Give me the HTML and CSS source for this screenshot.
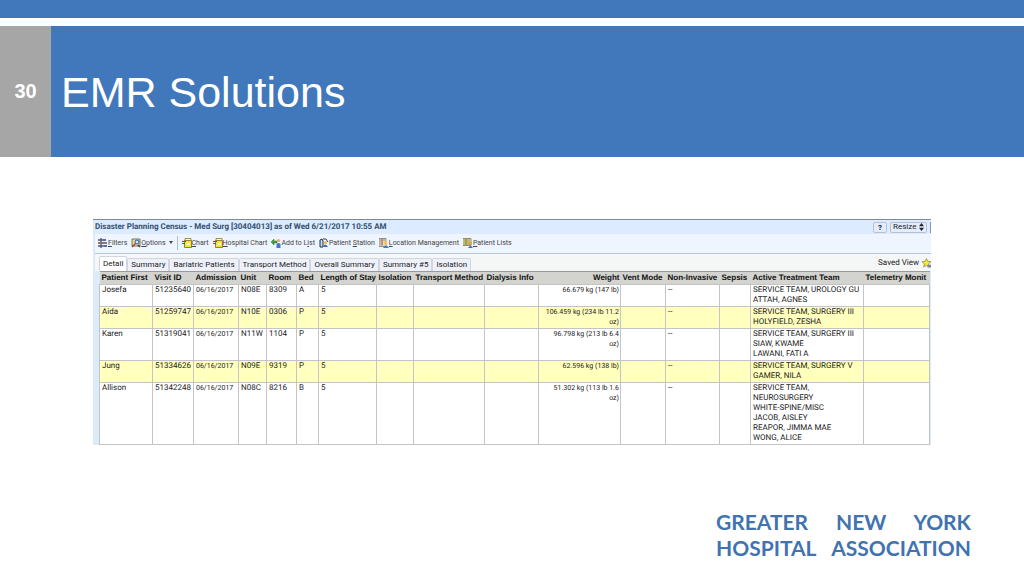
FILE: index.html
```
<!DOCTYPE html>
<html lang="en">
<head>
    <meta charset="UTF-8">
    <meta name="viewport" content="width=device-width, initial-scale=1.0">
    <title>EMR Solutions</title>
    <link rel="stylesheet" href="styles.css">
</head>
<body>
    <div class="top-bar"></div>
    <header class="slide-header">
        <div class="slide-number">30</div>
        <h1>EMR Solutions</h1>
    </header>

    <main class="census">
        <div class="census-title">
            <h2>Disaster Planning Census - Med Surg [30404013] as of Wed 6/21/2017 10:55 AM</h2>
            <div class="title-buttons">
                <button type="button" class="help">?</button>
                <button type="button" class="resize">Resize
                    <svg viewBox="0 0 5 8" width="5" height="8"><path d="M0 3.3L2.5 0 5 3.3zM0 4.7L2.5 8 5 4.7z" fill="#223"/></svg>
                </button>
                <span class="button-edge"></span>
            </div>
        </div>

        <!-- Toolbar -->
        <div class="toolbar">
            <button type="button">
                <svg viewBox="0 0 10 10"><path d="M3 0v10M0 2h6M0 5h9M0 8h6" stroke="#556" stroke-width="1.3"/><path d="M5 1h3v2H5zM6 7h3v2H6z" fill="#66a"/><path d="M1 4h2v2H1z" fill="#b66"/></svg>
                <span><u>F</u>ilters</span>
            </button>
            <button type="button">
                <svg viewBox="0 0 10 10"><path d="M1 1h8v7H1z" fill="#e9df8c" stroke="#555" stroke-width=".8"/><circle cx="6" cy="4" r="2" fill="#cfe4ff" stroke="#335a9c"/><path d="M4.5 5.5L1 9" stroke="#a33" stroke-width="1.3"/><path d="M7 7l2 2" stroke="#335" stroke-width="1.2"/></svg>
                <span><u>O</u>ptions</span>
                <svg class="arrow" viewBox="0 0 4 3"><path d="M0 0h4L2 3z" fill="#445"/></svg>
            </button>
            <span class="separator"></span>
            <button type="button">
                <svg viewBox="0 0 10 10"><path d="M2.5 2.5h7v7h-7z" fill="#f8e23c" stroke="#8b761c" stroke-width=".9"/><path d="M3 .5h6v2H3z" fill="#fffbd0" stroke="#8b761c" stroke-width=".8"/><path d="M0 3.5h4M0 5.5h3" stroke="#a33" stroke-width="1"/><path d="M4.5 5h3.5v2H4.5z" fill="#fffbd0"/></svg>
                <span><u>C</u>hart</span>
            </button>
            <button type="button">
                <svg viewBox="0 0 10 10"><path d="M2.5 2.5h7v7h-7z" fill="#f8e23c" stroke="#8b761c" stroke-width=".9"/><path d="M3 .5h6v2H3z" fill="#fffbd0" stroke="#8b761c" stroke-width=".8"/><path d="M0 3.5h4M0 5.5h3" stroke="#a33" stroke-width="1"/><path d="M4.5 5h3.5v2H4.5z" fill="#fffbd0"/></svg>
                <span><u>H</u>ospital Chart</span>
            </button>
            <button type="button">
                <svg viewBox="0 0 10 10"><path d="M0 4l3-3v2h3v2H3v2z" fill="#3fa244" stroke="#26722b" stroke-width=".5"/><circle cx="7.5" cy="2.5" r="1.6" fill="#e0b070"/><path d="M5.5 10V6q2-2 4 0v4z" fill="#3f78c8"/></svg>
                <span>Add to L<u>i</u>st</span>
            </button>
            <button type="button">
                <svg viewBox="0 0 10 10"><path d="M1 9V2l2-1 1 2v6z" fill="#c9d9ee" stroke="#234" stroke-width="1"/><path d="M4 1h3l2 3" fill="none" stroke="#345" stroke-width="1"/><circle cx="6.5" cy="4.5" r="1.6" fill="#e7b86c"/><path d="M4 9q2-5 5 0z" fill="#3d6fc0"/></svg>
                <span>Patient <u>S</u>tation</span>
            </button>
            <button type="button">
                <svg viewBox="0 0 10 10"><path d="M0 .5h7v8H0z" fill="#dfe5c2" stroke="#667" stroke-width=".7"/><path d="M1 2h5M1 4h3M1 6h3M3 1v7" stroke="#a65" stroke-width=".8"/><circle cx="6.5" cy="5" r="1.9" fill="#efc65c"/><path d="M4 10q3-5 6 0z" fill="#4179c4"/></svg>
                <span><u>L</u>ocation Management</span>
            </button>
            <button type="button">
                <svg viewBox="0 0 10 10"><path d="M0 .5h8v7H0z" fill="#f2e78c" stroke="#665" stroke-width=".7"/><path d="M1 2h6M1 4h6M1 6h6M3 1v6" stroke="#7a7438" stroke-width=".8"/><circle cx="7.5" cy="5.5" r="1.5" fill="#d99c5a"/><path d="M5 10q2.5-4 5 0z" fill="#3b6cba"/></svg>
                <span><u>P</u>atient Lists</span>
            </button>
        </div>

        <!-- Tabs -->
        <div class="tab-row">
            <nav class="tabs">
                <button type="button" class="active">Detail</button>
                <button type="button">Summary</button>
                <button type="button">Bariatric Patients</button>
                <button type="button">Transport Method</button>
                <button type="button">Overall Summary</button>
                <button type="button">Summary #5</button>
                <button type="button">Isolation</button>
            </nav>
            <div class="saved-view">
                <span>Saved View</span>
                <svg viewBox="0 0 10 12" width="9" height="12"><path d="M5 1l1.4 3.2 3.6.4-2.7 2.3.8 3.6L5 8.6l-3.1 1.9.8-3.6L0 4.6l3.6-.4z" fill="#f4ea35" stroke="#8c8730" stroke-width=".8"/><path d="M6 8h4v3H6z" fill="#7a86a8"/></svg>
            </div>
        </div>

        <table>
            <colgroup>
                <col class="c-name"><col class="c-visit"><col class="c-date"><col class="c-unit">
                <col class="c-room"><col class="c-bed"><col class="c-stay"><col class="c-iso">
                <col class="c-transport"><col class="c-dialysis"><col class="c-weight"><col class="c-vent">
                <col class="c-invasive"><col class="c-sepsis"><col class="c-team"><col class="c-monitor">
            </colgroup>
            <thead>
                <tr>
                    <th>Patient First</th><th>Visit ID</th><th>Admission</th><th>Unit</th>
                    <th>Room</th><th>Bed</th><th>Length of Stay</th><th>Isolation</th>
                    <th>Transport Method</th><th>Dialysis Info</th><th class="weight">Weight</th><th>Vent Mode</th>
                    <th>Non-Invasive</th><th>Sepsis</th><th>Active Treatment Team</th><th>Telemetry Monit</th>
                </tr>
            </thead>
            <tbody>
                <tr>
                    <td>Josefa</td><td>51235640</td><td class="date">06/16/2017</td><td>N08E</td><td>8309</td><td>A</td><td>5</td>
                    <td></td><td></td><td></td><td class="weight">66.679 kg (147 lb)</td><td></td><td>--</td><td></td>
                    <td>SERVICE TEAM, UROLOGY GU<br>ATTAH, AGNES</td><td></td>
                </tr>
                <tr>
                    <td>Aida</td><td>51259747</td><td class="date">06/16/2017</td><td>N10E</td><td>0306</td><td>P</td><td>5</td>
                    <td></td><td></td><td></td><td class="weight">106.459 kg (234 lb 11.2<br>oz)</td><td></td><td>--</td><td></td>
                    <td>SERVICE TEAM, SURGERY III<br>HOLYFIELD, ZESHA</td><td></td>
                </tr>
                <tr>
                    <td>Karen</td><td>51319041</td><td class="date">06/16/2017</td><td>N11W</td><td>1104</td><td>P</td><td>5</td>
                    <td></td><td></td><td></td><td class="weight">96.798 kg (213 lb 6.4<br>oz)</td><td></td><td>--</td><td></td>
                    <td>SERVICE TEAM, SURGERY III<br>SIAW, KWAME<br>LAWANI, FATI A</td><td></td>
                </tr>
                <tr>
                    <td>Jung</td><td>51334626</td><td class="date">06/16/2017</td><td>N09E</td><td>9319</td><td>P</td><td>5</td>
                    <td></td><td></td><td></td><td class="weight">62.596 kg (138 lb)</td><td></td><td>--</td><td></td>
                    <td>SERVICE TEAM, SURGERY V<br>GAMER, NILA</td><td></td>
                </tr>
                <tr>
                    <td>Allison</td><td>51342248</td><td class="date">06/16/2017</td><td>N08C</td><td>8216</td><td>B</td><td>5</td>
                    <td></td><td></td><td></td><td class="weight">51.302 kg (113 lb 1.6<br>oz)</td><td></td><td>--</td><td></td>
                    <td>SERVICE TEAM,<br>NEUROSURGERY<br>WHITE-SPINE/MISC<br>JACOB, AISLEY<br>REAPOR, JIMMA MAE<br>WONG, ALICE</td><td></td>
                </tr>
            </tbody>
        </table>
    </main>

    <footer class="logo">
        <div class="logo-text">
            <div>GREATER NEW YORK</div>
            <div>HOSPITAL ASSOCIATION</div>
        </div>
    </footer>
</body>
</html>
```
FILE: styles.css
```
* {
    box-sizing: border-box;
}
body {
    margin: 0;
    background-color: white;
    font-family: "Liberation Sans", Arial, sans-serif;
}
button {
    font-family: inherit;
    font-size: inherit;
    line-height: inherit;
    color: inherit;
    border: none;
    background: none;
    padding: 0;
    cursor: pointer;
}
.top-bar {
    height: 18px;
    margin-bottom: 8px;
    background-color: #4178bc;
}
.slide-header {
    display: flex;
    height: 131px;
    background-color: #4178bc;
    color: white;
}
.slide-number {
    display: flex;
    align-items: center;
    justify-content: center;
    width: 51px;
    background-color: #a6a6a6;
    font-size: 20px;
    font-weight: bold;
}
h1 {
    margin: 0;
    padding: 2px 0 0 10px;
    align-self: center;
    font-size: 43px;
    font-weight: normal;
}

/* census window */
.census {
    margin: 62px 93px 0;
    padding-left: 2px;
    border-top: 1px solid #7d8a9a;
    background-color: #dcebfa;
    font-family: Roboto, Arial, sans-serif;
    font-size: 8px;
    line-height: 10px;
    text-rendering: geometricPrecision;
    color: #222;
    white-space: nowrap;
    overflow: hidden;
}
.census-title {
    display: flex;
    justify-content: space-between;
    align-items: center;
    height: 14px;
    background-color: #dcebff;
}
h2 {
    margin: 0;
    font-size: 8px;
    color: #34506e;
}
.title-buttons {
    display: flex;
    gap: 3px;
}
.title-buttons button {
    height: 11px;
    border: 1px solid #b4c2d8;
    border-radius: 2px;
    background-color: #e4ecf8;
    color: #223;
}
.title-buttons .help {
    width: 14px;
    font-weight: bold;
    line-height: 9px;
}
.title-buttons .resize {
    display: flex;
    align-items: center;
    justify-content: space-between;
    width: 37px;
    padding: 0 2px;
}
.button-edge {
    width: 1px;
    background-color: #8294b4;
}
.toolbar {
    display: flex;
    align-items: center;
    gap: 4px;
    height: 20px;
    padding: 0 0 2px 3px;
    border-bottom: 1px solid #bcc6d8;
    background-color: #eef5ff;
    font-size: 7px;
    color: #444;
}
.toolbar button {
    display: flex;
    align-items: center;
}
.toolbar svg {
    width: 10px;
    height: 10px;
}
.toolbar .arrow {
    width: 4px;
    height: 3px;
    margin-left: 3px;
}
.separator {
    width: 1px;
    height: 14px;
    background-color: #b4bcc8;
}
.tab-row {
    display: flex;
    justify-content: space-between;
    height: 17px;
    padding-left: 4px;
    background-color: #f5f6f6;
}
.tabs {
    display: flex;
    align-items: flex-end;
}
.tabs button {
    height: 13px;
    padding: 0 3px;
    border: 1px solid #d0d4e4;
    border-bottom: none;
    border-radius: 2px 2px 0 0;
    background-color: #eff1fa;
}
.tabs .active {
    height: 15px;
    background-color: white;
}
.saved-view {
    display: flex;
    align-items: center;
    gap: 3px;
}

/* patient table */
table {
    width: calc(100% - 5px);
    margin-left: 4px;
    table-layout: fixed;
    border-collapse: collapse;
    border-bottom: 1px solid #c4c49c;
}
th {
    height: 13px;
    padding: 0 0 0 2px;
    border-top: 1px solid #999;
    background-color: #d3d3cf;
    font-family: "Liberation Sans", Arial, sans-serif;
    text-align: left;
    color: #111;
}
td {
    padding: 0 0 1px 2px;
    border: 1px solid #c4c4c4;
    vertical-align: top;
    background-color: white;
}
tbody tr:nth-child(even) td {
    background-color: #ffffbe;
}
th.weight,
td.weight {
    padding-right: 1px;
    text-align: right;
}
td.date,
td.weight {
    font-size: 7px;
}
.c-name { width: 53px; }
.c-visit { width: 41px; }
.c-date { width: 45px; }
.c-unit { width: 28px; }
.c-room { width: 30px; }
.c-bed { width: 22px; }
.c-stay { width: 58px; }
.c-iso { width: 37px; }
.c-transport { width: 71px; }
.c-dialysis { width: 54px; }
.c-weight { width: 82px; }
.c-vent { width: 45px; }
.c-invasive { width: 54px; }
.c-sepsis { width: 31px; }
.c-team { width: 113px; }
.c-monitor { width: 66px; }

.logo {
    display: flex;
    justify-content: flex-end;
    padding: 64px 53px 0 0;
}
.logo-text {
    width: 255px;
    font-family: Lato, sans-serif;
    font-size: 21px;
    font-weight: bold;
    line-height: 26px;
    color: #4173b0;
    text-align-last: justify;
}
```
